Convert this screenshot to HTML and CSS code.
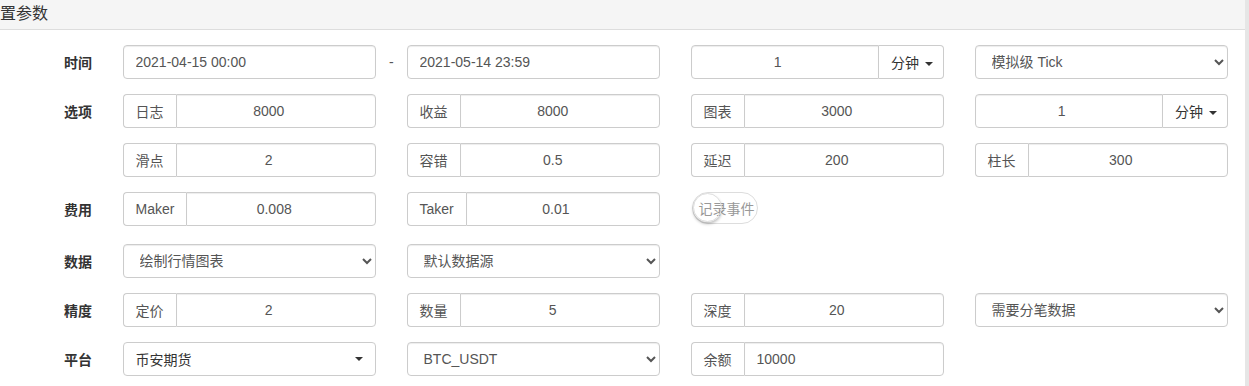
FILE: index.html
```html
<!DOCTYPE html>
<html lang="zh-CN">
<head>
  <meta charset="UTF-8" />
  <meta name="viewport" content="width=device-width, initial-scale=1.0"/>
  <title>设置参数</title>
  <link rel="stylesheet" href="styles.css">
</head>

<body>
  <div class="page">
    <div class="panel">
      <div class="panel-heading">置参数</div>

      <form class="params">
        <!-- 时间 -->
        <div class="row">
          <label class="row-label">时间</label>
          <div class="range">
            <input class="field" value="2021-04-15 00:00">
            <span class="range-sep">-</span>
            <input class="field" value="2021-05-14 23:59">
          </div>
          <div class="group">
            <input class="field center" value="1">
            <button type="button" class="group-btn">分钟 <span class="caret"></span></button>
          </div>
          <select class="field select"><option>模拟级 Tick</option></select>
        </div>

        <!-- 选项 -->
        <div class="row">
          <label class="row-label">选项</label>
          <div class="group">
            <span class="addon">日志</span>
            <input class="field center" value="8000">
          </div>
          <div class="group">
            <span class="addon">收益</span>
            <input class="field center" value="8000">
          </div>
          <div class="group">
            <span class="addon">图表</span>
            <input class="field center" value="3000">
          </div>
          <div class="group">
            <input class="field center" value="1">
            <button type="button" class="group-btn">分钟 <span class="caret"></span></button>
          </div>
        </div>

        <div class="row">
          <label class="row-label"></label>
          <div class="group">
            <span class="addon">滑点</span>
            <input class="field center" value="2">
          </div>
          <div class="group">
            <span class="addon">容错</span>
            <input class="field center" value="0.5">
          </div>
          <div class="group">
            <span class="addon">延迟</span>
            <input class="field center" value="200">
          </div>
          <div class="group">
            <span class="addon">柱长</span>
            <input class="field center" value="300">
          </div>
        </div>

        <!-- 费用 -->
        <div class="row fee-row">
          <label class="row-label">费用</label>
          <div class="group">
            <span class="addon">Maker</span>
            <input class="field center" value="0.008">
          </div>
          <div class="group">
            <span class="addon">Taker</span>
            <input class="field center" value="0.01">
          </div>
          <div class="toggle">
            <span class="toggle-text">记录事件</span>
            <span class="knob"></span>
          </div>
        </div>

        <!-- 数据 -->
        <div class="row">
          <label class="row-label">数据</label>
          <select class="field select"><option>绘制行情图表</option></select>
          <select class="field select"><option>默认数据源</option></select>
        </div>

        <!-- 精度 -->
        <div class="row">
          <label class="row-label">精度</label>
          <div class="group">
            <span class="addon">定价</span>
            <input class="field center" value="2">
          </div>
          <div class="group">
            <span class="addon">数量</span>
            <input class="field center" value="5">
          </div>
          <div class="group">
            <span class="addon">深度</span>
            <input class="field center" value="20">
          </div>
          <select class="field select"><option>需要分笔数据</option></select>
        </div>

        <!-- 平台 -->
        <div class="row">
          <label class="row-label">平台</label>
          <button type="button" class="field dropdown">
            <span>币安期货</span>
            <span class="caret"></span>
          </button>
          <select class="field select"><option>BTC_USDT</option></select>
          <div class="group">
            <span class="addon">余额</span>
            <input class="field" value="10000">
          </div>
        </div>
      </form>
    </div>
    <div class="scroll-edge"></div>
  </div>
</body>
</html>
```

FILE: styles.css
```css
body {
  margin: 0;
  font-family: "Liberation Sans", "Noto Sans CJK SC", sans-serif;
  font-size: 14px;
  color: #333;
  background-color: #fff;
  overflow: hidden;
}

.page {
  display: flex;
  min-height: 100vh;
}

.panel {
  flex: 1;
}

.scroll-edge {
  width: 4px;
  background-color: #e6e6e6;
}

.panel-heading {
  height: 29px;
  line-height: 28px;
  font-size: 16px;
  background-color: #f5f5f5;
  border-bottom: 1px solid #ddd;
}

.params {
  padding-top: 15px;
  display: flex;
  flex-direction: column;
  gap: 15px;
}

.row {
  display: grid;
  grid-template-columns: 92px repeat(4, 253.5px);
  column-gap: 30.5px;
  align-items: center;
  height: 34px;
}

.fee-row {
  margin-bottom: 3px;
}

.row-label {
  text-align: right;
  font-weight: bold;
}

.field {
  box-sizing: border-box;
  display: block;
  width: 100%;
  height: 34px;
  padding: 6px 12px;
  font: inherit;
  color: #555;
  background-color: #fff;
  border: 1px solid #ccc;
  border-radius: 4px;
  box-shadow: inset 0 1px 1px rgba(0, 0, 0, 0.075);
  outline: none;
}

.center {
  text-align: center;
  padding-right: 26px;
}

.select {
  padding-left: 12px;
}

.range {
  grid-column: span 2;
  display: flex;
  align-items: center;
}

.range .field {
  flex: 1;
  min-width: 0;
}

.range-sep {
  width: 30.5px;
  text-align: center;
  color: #555;
}

.group {
  display: flex;
  height: 34px;
}

.group .field {
  flex: 1;
  min-width: 0;
}

.addon {
  display: flex;
  align-items: center;
  padding: 6px 12px;
  color: #555;
  background-color: #fff;
  border: 1px solid #ccc;
  border-right: none;
  border-radius: 4px 0 0 4px;
}

.addon + .field {
  border-radius: 0 4px 4px 0;
}

.group .field:first-child {
  border-radius: 4px 0 0 4px;
}

.group-btn {
  width: 65px;
  flex: none;
  padding: 6px 12px;
  font: inherit;
  color: #333;
  background-color: #fff;
  border: 1px solid #ccc;
  border-left: none;
  border-radius: 0 4px 4px 0;
  white-space: nowrap;
}

.caret {
  display: inline-block;
  width: 0;
  height: 0;
  margin-left: 2px;
  vertical-align: middle;
  border-top: 4px solid #333;
  border-left: 4px solid transparent;
  border-right: 4px solid transparent;
}

.dropdown {
  display: flex;
  align-items: center;
  justify-content: space-between;
  text-align: left;
  color: #333;
  box-shadow: none;
}

.dropdown .caret {
  margin-right: 0;
}

.toggle {
  position: relative;
  justify-self: start;
  margin-left: 1px;
  width: 66px;
  height: 32px;
  box-sizing: border-box;
  border: 1px solid #ddd;
  border-radius: 16px;
  background-color: #fff;
  display: flex;
  align-items: center;
  padding-left: 6px;
  margin-top: -3px;
}

.toggle-text {
  color: #999;
  white-space: nowrap;
}

.knob {
  position: absolute;
  left: 0;
  top: 0;
  width: 29px;
  height: 29px;
  border-radius: 50%;
  border: 1px solid #ddd;
  box-sizing: border-box;
  box-shadow: 0 2px 3px rgba(0, 0, 0, 0.25);
}
```
